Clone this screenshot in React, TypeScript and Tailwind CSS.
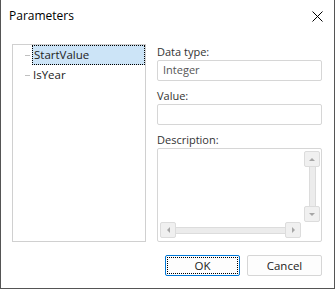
import React from "react";

const font = { fontFamily: '"Open Sans", "Noto Sans", sans-serif' };

function Arrow({ dir }: { dir: "up" | "down" | "left" | "right" }) {
  const pts =
    dir === "up"
      ? "0,3 3,0 6,3"
      : dir === "down"
      ? "0,0 6,0 3,3"
      : dir === "left"
      ? "3,0 3,6 0,3"
      : "0,0 0,6 3,3";
  const w = dir === "up" || dir === "down" ? 6 : 3;
  const h = dir === "up" || dir === "down" ? 3 : 6;
  return (
    <svg width={w} height={h} viewBox={`0 0 ${w} ${h}`}>
      <polygon points={pts} fill="#a6a6a6" />
    </svg>
  );
}

function SBtn({ dir }: { dir: "up" | "down" | "left" | "right" }) {
  return (
    <div className="w-[16px] h-[16px] shrink-0 rounded-[2px] border border-[#dcdcdc] bg-[#f0f0f0] flex items-center justify-center">
      <Arrow dir={dir} />
    </div>
  );
}

export default function App() {
  return (
    <div
      className="w-[335px] h-[289px] bg-white border-l border-r border-b border-[#555555] flex flex-col text-[#222]"
      style={font}
    >
      <div className="h-[32px] flex items-center justify-between pl-[8px] pr-[11px]">
        <span className="text-[12px] text-black">Parameters</span>
        <svg width="11" height="11" viewBox="0 0 11 11">
          <path d="M0.5 0.5 L10.5 10.5 M10.5 0.5 L0.5 10.5" stroke="#000" strokeWidth="1" />
        </svg>
      </div>
      <div className="flex mt-[12px] pl-[11px] pr-[12px] gap-[11px]">
        <div className="w-[134px] h-[198px] border border-[#d0d0d0] pt-0">
          <div className="flex items-center h-[20px]">
            <div className="w-[5px] h-px bg-[#c0c0c0] ml-[12px] mr-[2px]" />
            <div className="flex-1 h-[20px] bg-[#cce4f7] border border-dotted border-black flex items-center pl-[1px] text-[11.5px] text-[#222]">
              StartValue
            </div>
          </div>
          <div className="flex items-center h-[20px]">
            <div className="w-[5px] h-px bg-[#c0c0c0] ml-[12px] mr-[3px]" />
            <span className="text-[11.5px] text-[#222]">IsYear</span>
          </div>
        </div>
        <div className="flex-1 flex flex-col">
          <div className="h-[16px] flex items-center text-[11px] text-[#333]">Data type:</div>
          <div className="h-[21px] border border-[#d6d6d6] rounded-[2px] flex items-center pl-[5px] text-[11px] text-[#555]">
            Integer
          </div>
          <div className="h-[16px] mt-[7px] flex items-center text-[11px] text-[#333]">Value:</div>
          <div className="h-[21px] border border-[#d6d6d6] rounded-[2px]" />
          <div className="h-[16px] mt-[7px] flex items-center text-[11px] text-[#333]">Description:</div>
          <div className="h-[94px] border border-[#d6d6d6] rounded-[2px] pt-[2px] pl-[2px] pr-[1px] pb-[3px] grid grid-cols-[1fr_16px] grid-rows-[1fr_16px] gap-x-[3px]">
            <div />
            <div className="flex flex-col items-center">
              <SBtn dir="up" />
              <div className="flex-1 w-[7px] bg-[#ececec] border-l border-r border-[#dcdcdc]" />
              <SBtn dir="down" />
            </div>
            <div className="flex items-center">
              <SBtn dir="left" />
              <div className="flex-1 h-[7px] bg-[#ececec] border-t border-b border-[#dcdcdc]" />
              <SBtn dir="right" />
            </div>
            <div />
          </div>
        </div>
      </div>
      <div className="flex justify-end gap-[7px] pr-[12px] mt-[13px]">
        <div className="w-[75px] h-[21px] border border-[#0078d7] bg-[#fdfdfd] rounded-[2px] p-[1px]">
          <div className="w-full h-full border border-dotted border-black flex items-center justify-center text-[11.5px] text-[#222]">
            OK
          </div>
        </div>
        <div className="w-[75px] h-[21px] border border-[#d6d6d6] bg-[#fdfdfd] rounded-[2px] flex items-center justify-center text-[11.5px] text-[#222]">
          Cancel
        </div>
      </div>
    </div>
  );
}
